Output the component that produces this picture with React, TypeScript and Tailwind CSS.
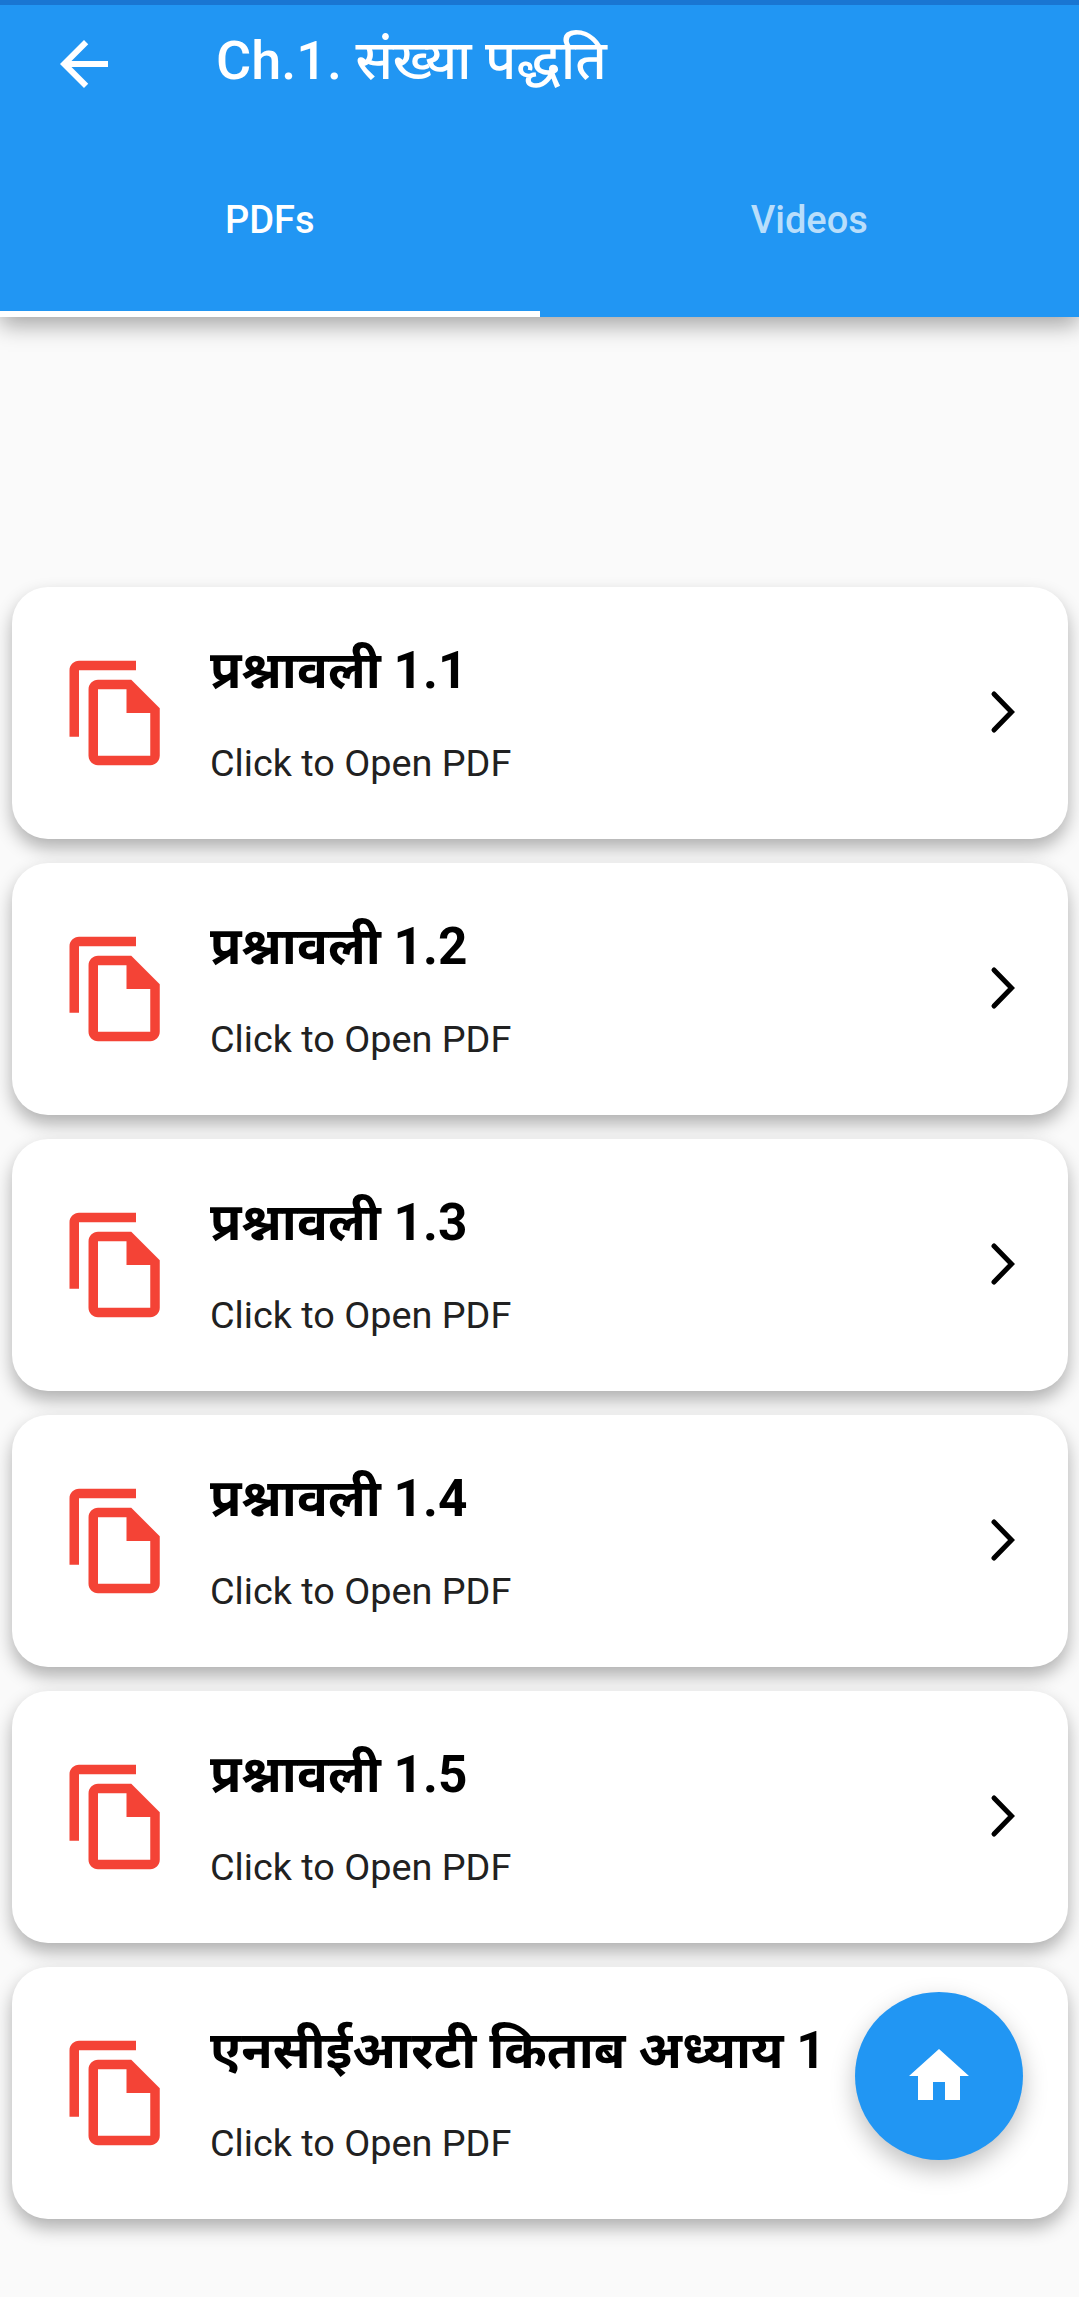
import React from "react";

const ROBOTO = "font-['Roboto','Noto_Sans','Noto_Sans_Devanagari','Lohit_Devanagari',sans-serif]";

function FileIcon() {
  return (
    <svg viewBox="0 0 24 24" className="w-[114px] h-[114px] shrink-0 fill-[#f44336]">
      <path d="M16 1H4c-1.1 0-2 .9-2 2v14h2V3h12V1zm-1 4H8c-1.1 0-1.99.9-1.99 2L6 21c0 1.1.89 2 1.99 2H19c1.1 0 2-.9 2-2V11l-6-6zM8 21V7h6v5h5v9H8z" />
    </svg>
  );
}

function Chevron() {
  return (
    <svg viewBox="0 0 66 66" className="w-[66px] h-[66px] shrink-0 fill-none stroke-black stroke-[5]">
      <path d="M23 14L40.5 32L23 50" strokeLinecap="round" strokeLinejoin="miter" />
    </svg>
  );
}

function Row({ title }: { title: string }) {
  return (
    <div className="h-[252px] bg-white rounded-[36px] shadow-[0_9px_18px_rgba(0,0,0,0.3)] flex items-center pl-[48px] pr-[31px]">
      <FileIcon />
      <div className="ml-[36px] flex-1 min-w-0">
        <div className="text-[51.3px] leading-[58px] font-bold text-black whitespace-nowrap">{title}</div>
        <div className="mt-[43px] text-[37.8px] leading-[41px] text-[#212121]">Click to Open PDF</div>
      </div>
      <Chevron />
    </div>
  );
}

export default function App() {
  const rows = ["प्रश्नावली 1.1", "प्रश्नावली 1.2", "प्रश्नावली 1.3", "प्रश्नावली 1.4", "प्रश्नावली 1.5", "एनसीईआरटी किताब अध्याय 1"];
  return (
    <div className={`relative w-[1079px] h-[2297px] overflow-hidden bg-[#fafafa] ${ROBOTO}`}>
      <div className="h-[317px] bg-[#2196f3] shadow-[0_8px_22px_rgba(0,0,0,0.35)] flex flex-col relative">
        <div className="h-[5px] bg-[#1976d2]" />
        <div className="h-[118px] flex items-center pl-[48px]">
          <svg viewBox="0 0 24 24" className="w-[72px] h-[72px] shrink-0 fill-white">
            <path d="M20 11H7.83l5.59-5.59L12 4l-8 8 8 8 1.41-1.41L7.83 13H20v-2z" />
          </svg>
          <div className="ml-[96px] mb-[6px] text-[54px] leading-[60px] font-medium text-white whitespace-nowrap">Ch.1. संख्या पद्धति</div>
        </div>
        <div className="flex flex-1">
          <div className="flex-1 flex items-center justify-center border-b-[6px] border-white pt-[6px] text-[38px] font-medium text-white">PDFs</div>
          <div className="flex-1 flex items-center justify-center border-b-[6px] border-transparent pt-[6px] text-[38px] font-medium text-white/70">Videos</div>
        </div>
      </div>
      <div className="flex flex-col gap-[24px] pt-[270px] pl-[12px] pr-[11px]">
        {rows.map((t) => (
          <Row key={t} title={t} />
        ))}
      </div>
      <button className="absolute left-[855px] top-[1992px] w-[168px] h-[168px] rounded-full bg-[#2196f3] shadow-[0_10px_24px_rgba(0,0,0,0.25)] flex items-center justify-center">
        <svg viewBox="0 0 24 24" className="w-[72px] h-[72px] fill-white">
          <path d="M10 20v-6h4v6h5v-8h3L12 3 2 12h3v8z" />
        </svg>
      </button>
    </div>
  );
}
